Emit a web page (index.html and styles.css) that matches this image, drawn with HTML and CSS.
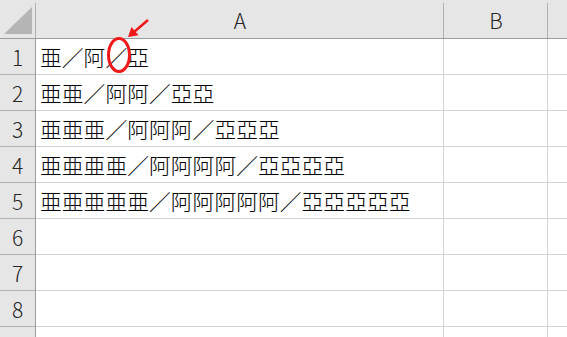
FILE: index.html
```html
<!DOCTYPE html>
<html lang="ja">
<head>
<meta charset="utf-8">
<link rel="stylesheet" href="styles.css">
</head>
<body>
<div class="sheet">
  <div class="grid">
    <div class="hd corner">
      <svg class="tri" width="36" height="38" viewBox="0 0 36 38"><polygon points="32,7 32,34 4,34" fill="#b5b5b5"/></svg>
    </div>
    <div class="hd col">A</div>
    <div class="hd col">B</div>
    <div class="hd col last"></div>

    <div class="rh">1</div><div class="cell">亜／阿／亞</div><div class="cell"></div><div class="cell last"></div>
    <div class="rh">2</div><div class="cell">亜亜／阿阿／亞亞</div><div class="cell"></div><div class="cell last"></div>
    <div class="rh">3</div><div class="cell">亜亜亜／阿阿阿／亞亞亞</div><div class="cell"></div><div class="cell last"></div>
    <div class="rh">4</div><div class="cell">亜亜亜亜／阿阿阿阿／亞亞亞亞</div><div class="cell"></div><div class="cell last"></div>
    <div class="rh">5</div><div class="cell">亜亜亜亜亜／阿阿阿阿阿／亞亞亞亞亞</div><div class="cell"></div><div class="cell last"></div>
    <div class="rh">6</div><div class="cell"></div><div class="cell"></div><div class="cell last"></div>
    <div class="rh">7</div><div class="cell"></div><div class="cell"></div><div class="cell last"></div>
    <div class="rh">8</div><div class="cell"></div><div class="cell"></div><div class="cell last"></div>
    <div class="rh">9</div><div class="cell"></div><div class="cell"></div><div class="cell last"></div>
  </div>
  <svg class="mark" width="567" height="337" viewBox="0 0 567 337">
    <ellipse cx="119" cy="55" rx="10.5" ry="16.5" fill="none" stroke="#f01818" stroke-width="3"/>
    <line x1="148" y1="20" x2="134" y2="32" stroke="#f01818" stroke-width="2.5"/>
    <polygon points="128,37 138.5,35.3 131.5,27" fill="#f01818"/>
  </svg>
</div>
</body>
</html>
```

FILE: styles.css
```css
html, body {
  margin: 0;
  padding: 0;
  background: #ffffff;
  overflow: hidden;
}

.sheet {
  position: relative;
  width: 567px;
  height: 337px;
  overflow: hidden;
}

.grid {
  display: grid;
  grid-template-columns: 36px 408px 104px 60px;
  grid-template-rows: 39px repeat(9, 36px);
  font-family: "Noto Sans CJK JP", "Noto Sans", sans-serif;
  font-weight: 300;
}

.hd {
  background-color: #e6e6e6;
  border-bottom: 1px solid #9c9c9c;
  box-sizing: border-box;
  display: flex;
  align-items: center;
  justify-content: center;
  font-size: 21px;
  color: #262626;
  background-image: linear-gradient(#b0b0b0, #b0b0b0);
  background-repeat: no-repeat;
  background-position: right bottom;
  background-size: 1px calc(100% - 3px);
}

.corner {
  background-image: linear-gradient(#b0b0b0, #b0b0b0);
  background-size: 1px calc(100% - 3px);
}

.tri {
  display: block;
}

.col {
  padding-top: 1px;
}

.rh {
  background: #e6e6e6;
  border-right: 1px solid #9c9c9c;
  border-bottom: 1px solid #b0b0b0;
  box-sizing: border-box;
  display: flex;
  align-items: center;
  justify-content: center;
  font-size: 21px;
  color: #262626;
  padding-top: 1px;
}

.cell {
  border-right: 1px solid #d4d4d4;
  border-bottom: 1px solid #d4d4d4;
  box-sizing: border-box;
  display: flex;
  align-items: center;
  padding: 0 0 0 4px;
  font-size: 21.8px;
  color: #000000;
  white-space: nowrap;
  overflow: visible;
  line-height: 1;
}

.mark {
  position: absolute;
  left: 0;
  top: 0;
  pointer-events: none;
}
```
